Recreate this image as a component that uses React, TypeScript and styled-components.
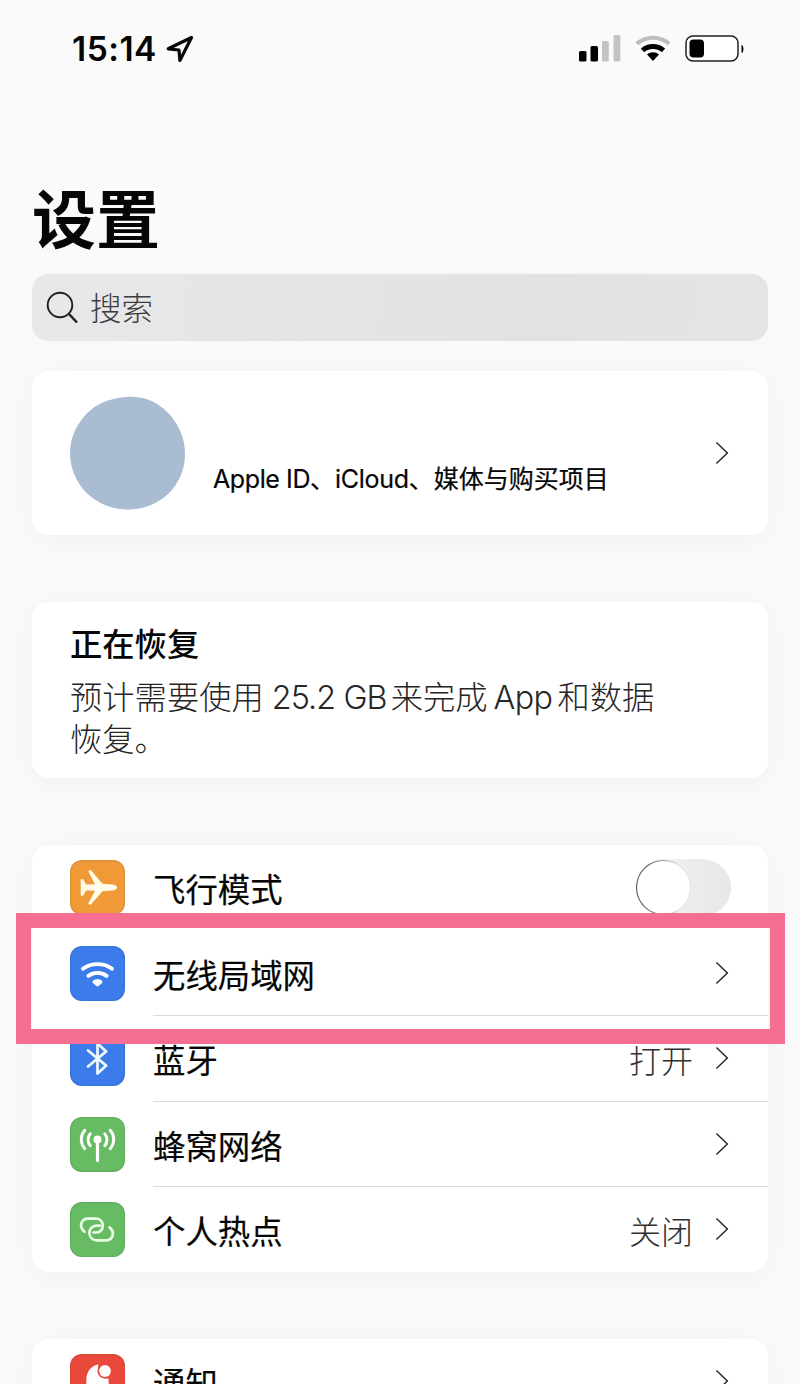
import React from "react";
import styled, { createGlobalStyle } from "styled-components";

const GlobalStyle = createGlobalStyle`
  * { box-sizing: border-box; }
  body {
    margin: 0;
    background: #fafafa;
    color: #060606;
    font-family: Inter, "Noto Sans CJK SC", sans-serif;
  }
`;

const Screen = styled.main`
  width: 800px;
  height: 1384px;
  overflow: hidden;
  display: flex;
  flex-direction: column;
  padding: 0 32px;
`;

const StatusBar = styled.header`
  height: 98px;
  flex: none;
  display: flex;
  align-items: center;
  justify-content: space-between;
  padding: 0 23px 0 39px;
`;

const StatusSide = styled.div<{ $gap: number }>`
  display: flex;
  align-items: center;
  gap: ${(p) => p.$gap}px;
`;

const Time = styled.span`
  font-size: 33.5px;
  font-weight: 600;
  line-height: 40px;
  letter-spacing: 0.5px;
  padding-left: 1px;
`;

const Title = styled.h1`
  margin: 77px 0 0;
  height: 99px;
  flex: none;
  font-size: 64px;
  line-height: 90px;
  font-weight: 700;
`;

const SearchField = styled.div`
  height: 67px;
  flex: none;
  display: flex;
  align-items: center;
  gap: 12px;
  padding-left: 14px;
  border-radius: 16px;
  background: linear-gradient(100deg, #e8e8e9, #e2e2e3 70%, #e5e5e6);
  color: #3c3c3e;
  font-size: 31.5px;
  line-height: 44px;
  font-weight: 300;
  box-shadow: 0 0 18px rgba(0, 0, 0, 0.02);
`;

const SearchText = styled.span`
  padding-top: 2px;
`;

const Card = styled.section<{ $top: number; $height: number }>`
  margin-top: ${(p) => p.$top}px;
  height: ${(p) => p.$height}px;
  flex: none;
  border-radius: 17px;
  background: #fff;
  box-shadow: 0 4px 34px rgba(0, 0, 0, 0.045);
`;

const ProfileCard = styled(Card)`
  display: flex;
  align-items: center;
  padding: 0 39px 0 38px;
`;

const Avatar = styled.svg`
  width: 116px;
  height: 116px;
  flex: none;
`;

const ProfileText = styled.div`
  flex: 1;
  margin: 52px 0 0 27px;
  font-size: 25px;
  line-height: 34px;
  white-space: nowrap;
  -webkit-text-stroke: 0.2px;
`;

const RestoreCard = styled(Card)`
  padding: 20px 38px;
`;

const RestoreTitle = styled.h2`
  margin: 0;
  padding-top: 1px;
  font-size: 32.3px;
  line-height: 44px;
  font-weight: 500;
`;

const RestoreText = styled.p`
  margin: 10px 0 0;
  font-size: 32.3px;
  line-height: 42px;
  font-weight: 300;
  color: #262626;
`;

const Latin = styled.span<{ $spacing: number; $before?: number; $after?: number }>`
  letter-spacing: ${(p) => p.$spacing}px;
  margin-left: ${(p) => p.$before ?? 0}px;
  margin-right: ${(p) => p.$after ?? 0}px;
`;

const Row = styled.div`
  position: relative;
  height: 85.55px;
  display: flex;
  align-items: center;
  padding-left: 38px;
`;

const RowBody = styled.div<{ $divider: boolean }>`
  align-self: stretch;
  flex: 1;
  margin-left: 28px;
  padding-right: 39px;
  display: flex;
  align-items: center;
  border-bottom: 1px solid ${(p) => (p.$divider ? "#dcdcdd" : "transparent")};
`;

const Label = styled.span`
  flex: 1;
  padding: 8px 0 0 0;
  font-size: 32.4px;
  line-height: 44px;
  -webkit-text-stroke: 0.2px;
`;

const Value = styled.span`
  padding-top: 8px;
  margin-right: 22px;
  font-size: 32px;
  line-height: 44px;
  font-weight: 300;
  color: #303030;
`;

const Tile = styled.div<{ $color: string }>`
  width: 55px;
  height: 55px;
  border-radius: 12px;
  background: ${(p) => p.$color};
  box-shadow: inset 0 0 2px rgba(0, 0, 0, 0.25);
`;

const TileIcon = styled.svg`
  display: block;
  width: 55px;
  height: 55px;
`;

const Toggle = styled.div`
  width: 95px;
  height: 57px;
  margin-right: -2px;
  border-radius: 29px;
  background: linear-gradient(90deg, #f4f4f4, #e7e7e7);
  display: flex;
  align-items: center;
`;

const Knob = styled.div`
  width: 55px;
  height: 55px;
  border-radius: 50%;
  background: linear-gradient(#fff, #fff) padding-box,
    linear-gradient(90deg, #4b4b4b 5%, #9a9a9a 45%, #e4e4e4 80%) border-box;
  border: 1px solid transparent;
`;

const Highlight = styled.div`
  position: absolute;
  z-index: 1;
  top: -17.5px;
  left: -16px;
  width: 769px;
  height: 131px;
  border: 15px solid #f66e92;
`;

const Chevron = () => (
  <svg width="14" height="24" viewBox="0 0 14 24" fill="none" stroke="#222" strokeWidth="1.4">
    <path d="M1.4 1.6 12.4 12 1.4 22.4" />
  </svg>
);

const glyphs = {
  plane: (
    <path
      fill="#fffbe8"
      d="M10.700 19.300h1.900c.7 0 1 .4 1.300 1l2.200 4.200 8.900-.2-6.600-12.800c-.4-.9 1.800-1.900 2.800-1L32.500 23.700l10 .9c6.200.9 6.200 5.300 0 6l-10 .7-11.300 13c-1 .9-3.200-.1-2.800-1l6.600-12.500-8.900-.2-2.200 4.200c-.3.6-.6 1-1.300 1h-1.900z"
    />
  ),
  wifi: (
    <g fill="none" stroke="#fff" strokeWidth="3.9" strokeLinecap="round">
      <path d="M13 22.8c8.300-6.200 20.700-6.200 29 0" />
      <path d="M18.400 29.800c5.400-3.900 12.800-3.900 18.200 0" />
      <path fill="#fff" stroke="none" d="M23.200 34.600c2.500-1.800 6.100-1.800 8.600 0 1 .9.800 1.900 0 2.600l-2.900 2.600c-.9.8-1.900.8-2.800 0l-2.900-2.600c-.8-.7-1-1.700 0-2.600z" />
    </g>
  ),
  bluetooth: (
    <path
      fill="none"
      stroke="#eef8ff"
      strokeWidth="2.700"
      strokeLinejoin="round"
      strokeLinecap="round"
      d="M18 19.500 36.200 34.600 27.500 42.600V12.400L36.200 20.400 18 35.500"
    />
  ),
  cellular: (
    <g fill="none" stroke="#fff" strokeWidth="2.900" strokeLinecap="round">
      <circle cx="27.500" cy="22.500" r="4" fill="#fff" stroke="none" />
      <path strokeWidth="3.200" d="M27.500 24v19.500" />
      <path d="M20.300 16.700c-3 3.300-3 8.700 0 12M34.700 16.700c3 3.300 3 8.700 0 12" />
      <path d="M14.800 13.300c-4.700 5.400-4.700 13 0 18.400M40.200 13.300c4.700 5.400 4.700 13 0 18.400" />
    </g>
  ),
  hotspot: (
    <g fill="none" stroke="#e9ffe5" strokeWidth="2.700" strokeLinecap="round">
      <path d="M14.500 29.600C8.500 24.800 11 16.600 18 16.600h8.300c8.400 0 8.800 13.900 0 13.900h-2.800" />
      <path d="M39.500 25.400C45.500 30.200 43 38.300 36 38.300h-8.800c-10.300 0-10.300-14.700-.4-14.700h3" />
    </g>
  ),
  bell: (
    <g fill="#fff">
      <path d="M28.500 10.500c-7.500 1-12.100 7.500-12.100 15C16.400 34 15 38 10 42h35c-5-4-6.500-8-6.500-17.500-7 1-12.500-6-10-14z" />
      <circle cx="35" cy="17" r="7.600" fill="#e9493a" />
      <circle cx="35" cy="17" r="5.900" />
    </g>
  ),
};

type RowData = {
  label: string;
  color: string;
  icon: keyof typeof glyphs;
  value?: string;
  toggle?: boolean;
  highlighted?: boolean;
  divider?: boolean;
};

const network: RowData[] = [
  { label: "飞行模式", color: "#ef9937", icon: "plane", toggle: true },
  { label: "无线局域网", color: "#3b7bea", icon: "wifi", highlighted: true, divider: true },
  { label: "蓝牙", color: "#3b7bea", icon: "bluetooth", value: "打开", divider: true },
  { label: "蜂窝网络", color: "#66bb63", icon: "cellular", divider: true },
  { label: "个人热点", color: "#66bb63", icon: "hotspot", value: "关闭" },
];

const SettingsRow = ({ item }: { item: RowData }) => (
  <Row>
    <Tile $color={item.color}>
      <TileIcon viewBox="0 0 55 55">{glyphs[item.icon]}</TileIcon>
    </Tile>
    <RowBody $divider={!!item.divider}>
      <Label>{item.label}</Label>
      {item.value && <Value>{item.value}</Value>}
      {item.toggle ? (
        <Toggle>
          <Knob />
        </Toggle>
      ) : (
        <Chevron />
      )}
    </RowBody>
    {item.highlighted && <Highlight />}
  </Row>
);

export default function App() {
  return (
    <Screen>
      <GlobalStyle />
      <StatusBar>
        <StatusSide $gap={9}>
          <Time>15:14</Time>
          <svg width="28" height="28" viewBox="0 0 28 28" fill="none" stroke="#060606" strokeWidth="3.200" strokeLinejoin="round">
            <path d="M25.500 2.500 2.200 13.800l10.800 1.200.900 10.500z" />
          </svg>
        </StatusSide>
        <StatusSide $gap={14}>
          <svg width="42" height="28" viewBox="0 0 42 28">
            <rect x="0" y="16" width="7.500" height="10.500" rx="1.500" fill="#000" />
            <rect x="11.500" y="11" width="7.500" height="15.500" rx="1.500" fill="#000" />
            <rect x="23" y="6" width="6.800" height="20.500" rx="1" fill="#c3c3c3" />
            <rect x="34.500" y="0" width="6.800" height="26.500" rx="1" fill="#c3c3c3" />
          </svg>
          <svg width="36" height="28" viewBox="0 0 36 28" fill="none">
            <path d="M1.800 8.800c9-8.200 23.400-8.200 32.400 0" stroke="#bdbdbd" strokeWidth="4" />
            <path d="M7.500 15.300c6.200-5.200 14.800-5.200 21 0" stroke="#000" strokeWidth="5" />
            <path d="M12 19.500c3.500-3 8.500-3 12 0L18 26z" fill="#000" />
          </svg>
          <svg width="60" height="28" viewBox="0 0 60 28">
            <rect x="1" y="1" width="52" height="25" rx="7" fill="#fff" stroke="#222" strokeWidth="1.500" />
            <rect x="4.500" y="4.500" width="14.500" height="18" rx="4" fill="#000" />
            <path d="M57 10.500c1.300 1.500 1.300 5.500 0 7z" fill="#000" stroke="#000" />
          </svg>
        </StatusSide>
      </StatusBar>

      <Title>设置</Title>
      <SearchField>
        <svg width="32" height="33" viewBox="0 0 32 33" fill="none" stroke="#202020">
          <circle cx="14" cy="14" r="12.300" strokeWidth="1.900" />
          <path d="m22.500 22.500 8.500 9" strokeWidth="2.500" />
        </svg>
        <SearchText>搜索</SearchText>
      </SearchField>

      <ProfileCard $top={30} $height={164}>
        <Avatar viewBox="0 0 116 116">
          <path
            fill="#a9bcd1"
            d="M38 5.500C52 .8 66 .3 78 4.500c22 8.500 37 31 37 54.500 0 31-24.500 55.500-57 55.500S0 90 0 57.500C0 35 16 14 34 7z"
          />
        </Avatar>
        <ProfileText>
          <Latin $spacing={-0.4}>Apple ID</Latin>、<Latin $spacing={-0.3}>iCloud</Latin>、媒体与购买项目
        </ProfileText>
        <Chevron />
      </ProfileCard>

      <RestoreCard $top={67} $height={176}>
        <RestoreTitle>正在恢复</RestoreTitle>
        <RestoreText>
          预计需要使用
          <Latin $spacing={-0.9} $before={8} $after={4}>
            25.2 GB
          </Latin>
          来完成
          <Latin $spacing={-0.6} $before={6} $after={5}>
            App
          </Latin>
          和数据
          <br />
          恢复。
        </RestoreText>
      </RestoreCard>

      <Card $top={67} $height={427}>
        {network.map((item) => (
          <SettingsRow key={item.label} item={item} />
        ))}
      </Card>

      <Card $top={67} $height={427}>
        <SettingsRow item={{ label: "通知", color: "#e9493a", icon: "bell" }} />
      </Card>
    </Screen>
  );
}
